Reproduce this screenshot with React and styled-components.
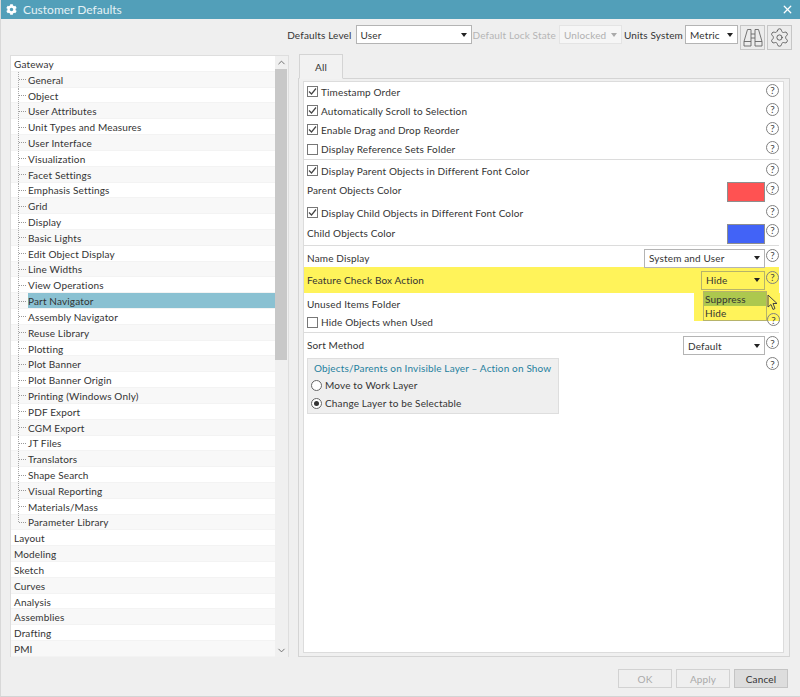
import React from "react";
import styled, { createGlobalStyle } from "styled-components";
import { X, Settings, ChevronUp, ChevronDown } from "lucide-react";
import { FaCog } from "react-icons/fa";

const GlobalStyle = createGlobalStyle`
  html, body {
    margin: 0;
    padding: 0;
    background: #efefef;
  }
  * {
    box-sizing: border-box;
  }
`;

const Window = styled.div`
  position: relative;
  width: 800px;
  height: 697px;
  display: flex;
  flex-direction: column;
  background: #efefef;
  border-left: 1px solid #d8d8d8;
  border-bottom: 1px solid #d4d4d4;
  overflow: hidden;
  font-family: "Lato", sans-serif;
  font-size: 10px;
  letter-spacing: 0.15px;
  color: #333;
`;

const TitleBar = styled.div`
  height: 19px;
  margin-left: -1px;
  padding: 0 6px;
  display: flex;
  align-items: center;
  gap: 6px;
  background: #529fb9;
  color: #e4f1f5;
  font-size: 12px;
  letter-spacing: 0;
  svg {
    color: #fff;
  }
`;

const TitleText = styled.span`
  flex: 1;
`;

const Toolbar = styled.div`
  height: 36px;
  padding: 6px 8px 0 0;
  display: flex;
  justify-content: flex-end;
  align-items: flex-start;
`;

const ToolLabel = styled.span`
  height: 19px;
  line-height: 20px;
  margin-right: ${(p) => p.$gap || 4}px;
  color: ${(p) => (p.$muted ? "#b5b5b5" : "#333")};
`;

const Select = styled.div`
  width: ${(p) => p.$w}px;
  height: 19px;
  padding: 0 4px;
  flex: none;
  display: flex;
  align-items: center;
  justify-content: space-between;
  background: ${(p) => (p.$flat ? "transparent" : p.$muted ? "#f6f6f6" : "#fff")};
  border: 1px solid ${(p) => (p.$flat ? "#b6b36a" : p.$muted ? "#e4e4e4" : "#b4b4b4")};
  color: ${(p) => (p.$muted ? "#b0b0b0" : "#333")};
  margin-right: ${(p) => p.$gap || 0}px;
`;

const Caret = styled.span`
  width: 0;
  height: 0;
  border-left: 3.5px solid transparent;
  border-right: 3.5px solid transparent;
  border-top: 4px solid ${(p) => (p.$muted ? "#aaa" : "#222")};
`;

const IconButton = styled.button`
  width: 25px;
  height: 25px;
  margin-left: 2px;
  padding: 0;
  display: flex;
  align-items: center;
  justify-content: center;
  background: #ececec;
  border: 1px solid #c6c6c6;
  color: #555;
`;

const Main = styled.div`
  height: 602px;
  padding: 0 9px;
  display: flex;
  gap: 9px;
`;

const TreePanel = styled.div`
  width: 279px;
  display: flex;
  border: 1px solid #dedede;
  border-bottom: none;
  background: #f0f0f0;
`;

const TreeList = styled.div`
  flex: 1;
  display: flex;
  flex-direction: column;
`;

const TreeRow = styled.div`
  flex: 1;
  min-height: 0;
  position: relative;
  display: flex;
  align-items: center;
  padding-left: ${(p) => (p.$child ? 15 : 3)}px;
  background: ${(p) => (p.$alt ? "#f8f8f8" : "#fff")};
  border-bottom: 1px solid #f3f3f3;
  white-space: nowrap;

  ${(p) =>
    p.$child &&
    `
    &::before {
      content: "";
      position: absolute;
      left: 7px;
      top: 0;
      bottom: ${p.$last ? "50%" : "0"};
      border-left: 1px dotted #aaa;
    }
    &::after {
      content: "";
      position: absolute;
      left: 8px;
      top: 50%;
      width: 7px;
      border-top: 1px dotted #999;
    }
  `}
`;

const TreeText = styled.span`
  flex: 1;
  height: 100%;
  padding-top: 1px;
  display: flex;
  align-items: center;
  margin-left: ${(p) => (p.$child ? 2 : 0)}px;
  background: ${(p) => (p.$selected ? "#8ac1d2" : "transparent")};
`;

const ScrollBar = styled.div`
  width: 13px;
  display: flex;
  flex-direction: column;
  align-items: stretch;
  color: #666;
`;

const ScrollArrow = styled.div`
  height: 13px;
  display: flex;
  align-items: center;
  justify-content: center;
`;

const ScrollThumb = styled.div`
  height: 291px;
  margin-right: 1px;
  background: #c8c8c8;
`;

const ScrollRest = styled.div`
  flex: 1;
`;

const RightColumn = styled.div`
  width: 492px;
  margin-top: -1px;
  display: flex;
  flex-direction: column;
`;

const Tab = styled.div`
  width: 44px;
  height: 25px;
  margin-left: 1px;
  margin-bottom: -1px;
  display: flex;
  align-items: center;
  justify-content: center;
  background: #f2f2f2;
  border: 1px solid #d4d4d4;
  border-bottom-color: #f2f2f2;
  position: relative;
`;

const TabPanel = styled.div`
  flex: 1;
  padding: 2px 5px 3px 4px;
  display: flex;
  border: 1px solid #d4d4d4;
  background: #f0f0f0;
`;

const Content = styled.div`
  flex: 1;
  background: #fff;
  border: 1px solid #dcdcdc;
`;

const Row = styled.div`
  height: ${(p) => p.$h}px;
  margin-right: 4px;
  padding-left: 3px;
  padding-top: ${(p) => p.$pt || 0}px;
  display: flex;
  align-items: center;
  justify-content: space-between;
  background: ${(p) => (p.$highlight ? "#fff35a" : "transparent")};
  border-bottom: ${(p) => (p.$line ? "1px solid #dcdcdc" : "none")};
`;

const Label = styled.span`
  display: flex;
  align-items: center;
  gap: 3px;
  margin-bottom: ${(p) => p.$up || 0}px;
`;

const Controls = styled.div`
  display: flex;
  align-items: flex-start;
`;

const Swatch = styled.div`
  width: 38px;
  height: 20px;
  background: ${(p) => p.$color};
  border: 1px solid #8e8e8e;
`;

const Help = styled.span`
  width: 13px;
  height: 13px;
  margin-left: 1px;
  margin-bottom: ${(p) => p.$lift || 0}px;
  flex: none;
  display: flex;
  align-items: center;
  justify-content: center;
  border: 1px solid #808080;
  border-radius: 50%;
  background: ${(p) => (p.$clear ? "transparent" : "#fff")};
  font-size: 10px;
  letter-spacing: 0;
  line-height: 1;
  color: #444;
`;

const Spacer = styled.span`
  width: 14px;
`;

const CheckBox = styled.span`
  width: 11px;
  height: 11px;
  flex: none;
  display: flex;
  align-items: center;
  justify-content: center;
  background: #fff;
  border: 1px solid #777;
`;

const Radio = styled.span`
  width: 11px;
  height: 11px;
  flex: none;
  display: flex;
  align-items: center;
  justify-content: center;
  background: #fff;
  border: 1px solid #666;
  border-radius: 50%;
  &::after {
    content: "";
    width: 5px;
    height: 5px;
    border-radius: 50%;
    background: ${(p) => (p.$on ? "#333" : "transparent")};
  }
`;

const GroupRow = styled.div`
  margin-right: 4px;
  padding-left: 3px;
  display: flex;
  align-items: flex-start;
  justify-content: space-between;
`;

const Group = styled.div`
  width: 252px;
  height: 56px;
  padding-left: 3px;
  margin-top: 1px;
  background: #efefef;
  border: 1px solid #dedede;
`;

const GroupTitle = styled.div`
  height: 17px;
  padding-left: 3px;
  display: flex;
  align-items: center;
  color: #1f7f9e;
  white-space: nowrap;
`;

const RadioRow = styled.div`
  height: 18px;
  display: flex;
  align-items: center;
  gap: 3px;
`;

const Footer = styled.div`
  flex: 1;
  padding: 12px 12px 0 0;
  display: flex;
  justify-content: flex-end;
  align-items: flex-start;
  gap: 4px;
`;

const FooterButton = styled.button`
  width: 54px;
  height: 19px;
  padding: 0;
  font: inherit;
  letter-spacing: inherit;
  color: ${(p) => (p.$disabled ? "#aaa" : "#333")};
  background: ${(p) => (p.$disabled ? "#efefef" : "#dddddd")};
  border: 1px solid ${(p) => (p.$disabled ? "#d2d2d2" : "#c4c4c4")};
`;

const PopupZone = styled.div`
  position: absolute;
  left: 693px;
  top: 293px;
  width: 86px;
  height: 28px;
  background: #fff35a;
`;

const Popup = styled.div`
  position: absolute;
  left: 702px;
  top: 291px;
  width: 64px;
  height: 30px;
  background: #fff35a;
  border: 1px solid #b6b36a;
`;

const PopupItem = styled.div`
  height: 14px;
  padding-left: 1px;
  display: flex;
  align-items: center;
  background: ${(p) => (p.$active ? "#adc84e" : "transparent")};
`;

const Cursor = styled.svg`
  position: absolute;
  left: 766px;
  top: 294px;
`;

const FloatHelp = styled.div`
  position: absolute;
  left: 765px;
  top: 313px;
`;

const treeItems = [
  ["Gateway"],
  ["General", 1],
  ["Object", 1],
  ["User Attributes", 1],
  ["Unit Types and Measures", 1],
  ["User Interface", 1],
  ["Visualization", 1],
  ["Facet Settings", 1],
  ["Emphasis Settings", 1],
  ["Grid", 1],
  ["Display", 1],
  ["Basic Lights", 1],
  ["Edit Object Display", 1],
  ["Line Widths", 1],
  ["View Operations", 1],
  ["Part Navigator", 1],
  ["Assembly Navigator", 1],
  ["Reuse Library", 1],
  ["Plotting", 1],
  ["Plot Banner", 1],
  ["Plot Banner Origin", 1],
  ["Printing (Windows Only)", 1],
  ["PDF Export", 1],
  ["CGM Export", 1],
  ["JT Files", 1],
  ["Translators", 1],
  ["Shape Search", 1],
  ["Visual Reporting", 1],
  ["Materials/Mass", 1],
  ["Parameter Library", 1],
  ["Layout"],
  ["Modeling"],
  ["Sketch"],
  ["Curves"],
  ["Analysis"],
  ["Assemblies"],
  ["Drafting"],
  ["PMI"],
];

const Check = ({ on }) => (
  <CheckBox>
    {on && (
      <svg width="9" height="9" viewBox="0 0 9 9">
        <path d="M1 4.5 L3.5 7 L8 1.5" fill="none" stroke="#444" strokeWidth="1.2" />
      </svg>
    )}
  </CheckBox>
);

const Binoculars = () => (
  <svg width="20" height="20" viewBox="0 0 20 20" fill="none" stroke="#666" strokeWidth="0.9">
    <path d="M4.5 1.5h3.5v16.5h-7v-4.5zM15.5 1.5h-3.5v16.5h7v-4.5z" />
    <path d="M1 13.5h7M12 13.5h7M8 6h4M8 10h4" />
  </svg>
);

const App = () => {
  return (
    <Window>
      <GlobalStyle />
      <TitleBar>
        <FaCog size={11} />
        <TitleText>Customer Defaults</TitleText>
        <X size={13} strokeWidth={2.4} />
      </TitleBar>

      <Toolbar>
        <ToolLabel>Defaults Level</ToolLabel>
        <Select $w={116} $gap={1}>
          User
          <Caret />
        </Select>
        <ToolLabel $muted $gap={3}>Default Lock State</ToolLabel>
        <Select $w={63} $muted $gap={2}>
          Unlocked
          <Caret $muted />
        </Select>
        <ToolLabel $gap={2}>Units System</ToolLabel>
        <Select $w={53}>
          Metric
          <Caret />
        </Select>
        <IconButton>
          <Binoculars />
        </IconButton>
        <IconButton>
          <Settings size={21} strokeWidth={1} />
        </IconButton>
      </Toolbar>

      <Main>
        <TreePanel>
          <TreeList>
            {treeItems.map(([name, child], i) => (
              <TreeRow
                key={name}
                $child={child}
                $alt={i % 2 === 1}
                $last={name === "Parameter Library"}
              >
                <TreeText $child={child} $selected={name === "Part Navigator"}>
                  {name}
                </TreeText>
              </TreeRow>
            ))}
          </TreeList>
          <ScrollBar>
            <ScrollArrow>
              <ChevronUp size={11} strokeWidth={2} />
            </ScrollArrow>
            <ScrollThumb />
            <ScrollRest />
            <ScrollArrow>
              <ChevronDown size={11} strokeWidth={2} />
            </ScrollArrow>
          </ScrollBar>
        </TreePanel>

        <RightColumn>
          <Tab>All</Tab>
          <TabPanel>
            <Content>
              <Row $h={19}>
                <Label><Check on />Timestamp Order</Label>
                <Help $lift={3}>?</Help>
              </Row>
              <Row $h={19}>
                <Label><Check on />Automatically Scroll to Selection</Label>
                <Help $lift={3}>?</Help>
              </Row>
              <Row $h={19}>
                <Label><Check on />Enable Drag and Drop Reorder</Label>
                <Help $lift={3}>?</Help>
              </Row>
              <Row $h={21} $line>
                <Label><Check />Display Reference Sets Folder</Label>
                <Help $lift={3}>?</Help>
              </Row>
              <Row $h={21}>
                <Label><Check on />Display Parent Objects in Different Font Color</Label>
                <Help $lift={3}>?</Help>
              </Row>
              <Row $h={22}>
                <Label $up={4}>Parent Objects Color</Label>
                <Controls>
                  <Swatch $color="#ff5252" />
                  <Help>?</Help>
                </Controls>
              </Row>
              <Row $h={19}>
                <Label><Check on />Display Child Objects in Different Font Color</Label>
                <Help $lift={3}>?</Help>
              </Row>
              <Row $h={24} $line>
                <Label $up={2}>Child Objects Color</Label>
                <Controls>
                  <Swatch $color="#4263f7" />
                  <Help>?</Help>
                </Controls>
              </Row>
              <Row $h={21} $pt={3}>
                <Label>Name Display</Label>
                <Controls>
                  <Select $w={121}>
                    System and User
                    <Caret />
                  </Select>
                  <Help>?</Help>
                </Controls>
              </Row>
              <Row $h={26} $highlight>
                <Label>Feature Check Box Action</Label>
                <Controls>
                  <Select $w={64} $flat>
                    Hide
                    <Caret />
                  </Select>
                  <Help $clear>?</Help>
                </Controls>
              </Row>
              <Row $h={21}>
                <Label>Unused Items Folder</Label>
                <Spacer />
              </Row>
              <Row $h={19} $line>
                <Label $up={2}><Check />Hide Objects when Used</Label>
                <Spacer />
              </Row>
              <Row $h={24} $pt={1}>
                <Label $up={2}>Sort Method</Label>
                <Controls>
                  <Select $w={82}>
                    Default
                    <Caret />
                  </Select>
                  <Help>?</Help>
                </Controls>
              </Row>
              <GroupRow>
                <Group>
                  <GroupTitle>Objects/Parents on Invisible Layer – Action on Show</GroupTitle>
                  <RadioRow><Radio />Move to Work Layer</RadioRow>
                  <RadioRow><Radio $on />Change Layer to be Selectable</RadioRow>
                </Group>
                <Help>?</Help>
              </GroupRow>
            </Content>
          </TabPanel>
        </RightColumn>
      </Main>

      <Footer>
        <FooterButton $disabled>OK</FooterButton>
        <FooterButton $disabled>Apply</FooterButton>
        <FooterButton>Cancel</FooterButton>
      </Footer>

      <PopupZone />
      <Popup>
        <PopupItem $active>Suppress</PopupItem>
        <PopupItem>Hide</PopupItem>
      </Popup>
      <FloatHelp>
        <Help $clear>?</Help>
      </FloatHelp>
      <Cursor width="11" height="17" viewBox="0 0 11 17">
        <path d="M1 1 L1 13 L4 10.5 L6 15.5 L8 14.5 L6 9.5 L10 9.5 Z" fill="#fff35a" stroke="#444" strokeWidth="1" />
      </Cursor>
    </Window>
  );
};

export default App;
